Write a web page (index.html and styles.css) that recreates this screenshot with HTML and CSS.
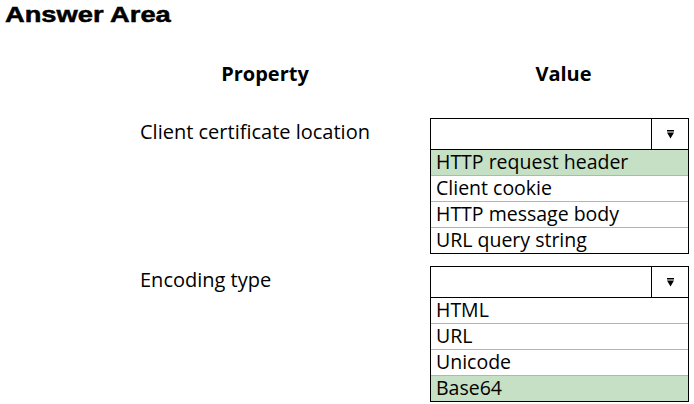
FILE: index.html
```html
<!DOCTYPE html>
<html lang="en">
<head>
  <meta charset="UTF-8">
  <meta name="viewport" content="width=device-width, initial-scale=1.0">
  <title>Answer Area</title>
  <link rel="stylesheet" href="styles.css">
</head>
<body>
  <h1 class="title">Answer Area</h1>

  <div class="answer-grid">
    <div class="col-head">Property</div>
    <div class="col-head value-head">Value</div>

    <div class="prop-label">Client certificate location</div>
    <div class="dropdown">
      <div class="dropdown-box">
        <span class="dropdown-text"></span>
        <span class="dropdown-arrow">
          <svg width="7" height="9" viewBox="0 0 7 9"><rect x="0" y="0" width="7" height="1.5" fill="#000"/><path d="M0 2.5 H7 L3.5 8.5 Z" fill="#000"/></svg>
        </span>
      </div>
      <ul class="dropdown-list">
        <li class="picked">HTTP request header</li>
        <li>Client cookie</li>
        <li>HTTP message body</li>
        <li>URL query string</li>
      </ul>
    </div>

    <div class="prop-label">Encoding type</div>
    <div class="dropdown">
      <div class="dropdown-box">
        <span class="dropdown-text"></span>
        <span class="dropdown-arrow">
          <svg width="7" height="9" viewBox="0 0 7 9"><rect x="0" y="0" width="7" height="1.5" fill="#000"/><path d="M0 2.5 H7 L3.5 8.5 Z" fill="#000"/></svg>
        </span>
      </div>
      <ul class="dropdown-list">
        <li>HTML</li>
        <li>URL</li>
        <li>Unicode</li>
        <li class="picked">Base64</li>
      </ul>
    </div>
  </div>
</body>
</html>
```

FILE: styles.css
```css
body {
  font-family: "Open Sans", "Noto Sans", sans-serif;
  background: #fff;
  color: #000;
  margin: 0;
  padding: 0;
  overflow: hidden;
}
.title {
  font-family: "Liberation Sans", Arial, sans-serif;
  font-weight: bold;
  font-size: 22px;
  line-height: 25px;
  width: fit-content;
  margin: 0;
  padding: 2px 0 0 4px;
  -webkit-text-stroke: 0.5px #000;
  transform: scaleX(1.24);
  transform-origin: left;
}
.answer-grid {
  display: grid;
  grid-template-columns: 250px 259px;
  column-gap: 40px;
  row-gap: 12px;
  margin-left: 140px;
  margin-top: 33px;
}
.col-head {
  font-weight: bold;
  font-size: 20px;
  text-align: center;
  margin-bottom: 19px;
}
.value-head {
  padding-left: 8px;
}
.prop-label {
  font-size: 20px;
  line-height: 27px;
}
.dropdown-box {
  display: flex;
  height: 30px;
  border: 1px solid #000;
}
.dropdown-text {
  flex: 1;
}
.dropdown-arrow {
  width: 36px;
  border-left: 1px solid #000;
  display: flex;
  align-items: center;
  justify-content: center;
}
.dropdown-list {
  list-style: none;
  margin: 0;
  padding: 0;
  border: 1px solid #000;
  border-top: none;
}
.dropdown-list li {
  font-size: 19.5px;
  height: 25px;
  line-height: 24px;
  padding-left: 5px;
  border-bottom: 1px solid #b4b4b4;
}
.dropdown-list li:last-child {
  border-bottom: none;
}
.dropdown-list li.picked {
  background: #c5e0c4;
}
```
